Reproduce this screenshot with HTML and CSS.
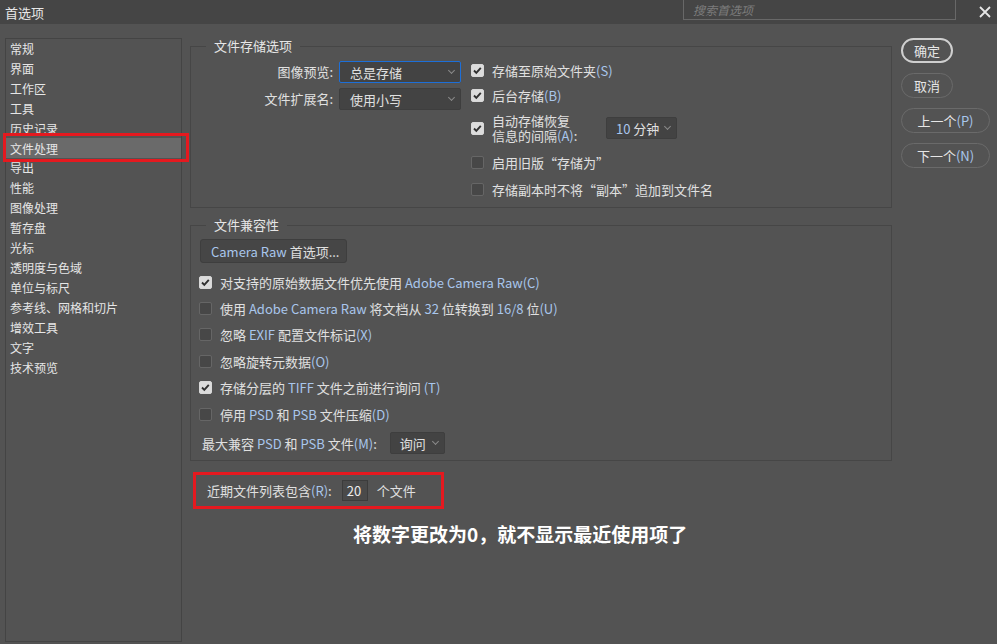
FILE: index.html
```html
<!DOCTYPE html>
<html lang="zh-CN">

<head>
    <meta charset="UTF-8">
    <title>首选项</title>
    <link rel="stylesheet" href="styles.css">
</head>

<body>
    <header class="titlebar">
        <span class="title">首选项</span>
        <div class="search">搜索首选项</div>
        <span class="close">
            <svg width="12" height="12" viewBox="0 0 12 12"><path d="M1 1 L11 11 M11 1 L1 11" stroke="#e6e6e6" stroke-width="1.8" fill="none"/></svg>
        </span>
    </header>

    <div class="window">
        <!-- left menu -->
        <aside class="sidebar">
            <ul class="menu">
                <li>常规</li>
                <li>界面</li>
                <li>工作区</li>
                <li>工具</li>
                <li>历史记录</li>
                <li class="active">文件处理</li>
                <li>导出</li>
                <li>性能</li>
                <li>图像处理</li>
                <li>暂存盘</li>
                <li>光标</li>
                <li>透明度与色域</li>
                <li>单位与标尺</li>
                <li>参考线、网格和切片</li>
                <li>增效工具</li>
                <li>文字</li>
                <li>技术预览</li>
            </ul>
            <div class="mark"></div>
        </aside>

        <main class="main">
            <fieldset class="group store">
                <legend>文件存储选项</legend>
                <div class="store-body">
                    <div class="store-left">
                        <label>图像预览:</label>
                        <div class="select focus"><span>总是存储</span><i class="chev"></i></div>
                        <label>文件扩展名:</label>
                        <div class="select"><span>使用小写</span><i class="chev"></i></div>
                    </div>
                    <div class="store-right">
                        <div class="check-row r1"><span class="box on"></span><span>存储至原始文件夹<span class="en">(S)</span></span></div>
                        <div class="check-row r2"><span class="box on"></span><span>后台存储<span class="en">(B)</span></span></div>
                        <div class="check-row r3">
                            <span class="box on"></span>
                            <span class="two-line"><span class="ln">自动存储恢复</span><span class="ln">信息的间隔<span class="en">(A)</span>:</span></span>
                            <div class="select minutes"><span><span class="en">10</span> 分钟</span><i class="chev"></i></div>
                        </div>
                        <div class="check-row r4"><span class="box"></span><span>启用旧版“存储为”</span></div>
                        <div class="check-row r5"><span class="box"></span><span>存储副本时不将“副本”追加到文件名</span></div>
                    </div>
                </div>
            </fieldset>

            <fieldset class="group compat">
                <legend>文件兼容性</legend>
                <div class="compat-body">
                    <button class="raw-btn"><span class="en">Camera Raw</span> 首选项...</button>
                    <div class="row first"><span class="box on"></span><span>对支持的原始数据文件优先使用 <span class="en">Adobe Camera Raw(C)</span></span></div>
                    <div class="row"><span class="box"></span><span>使用 <span class="en">Adobe Camera Raw</span> 将文档从 <span class="en">32</span> 位转换到 <span class="en">16/8</span> 位<span class="en">(U)</span></span></div>
                    <div class="row"><span class="box"></span><span>忽略 <span class="en">EXIF</span> 配置文件标记<span class="en">(X)</span></span></div>
                    <div class="row"><span class="box"></span><span>忽略旋转元数据<span class="en">(O)</span></span></div>
                    <div class="row"><span class="box on"></span><span>存储分层的 <span class="en">TIFF</span> 文件之前进行询问 <span class="en">(T)</span></span></div>
                    <div class="row"><span class="box"></span><span>停用 <span class="en">PSD</span> 和 <span class="en">PSB</span> 文件压缩<span class="en">(D)</span></span></div>
                    <div class="max-row">
                        <span>最大兼容 <span class="en">PSD</span> 和 <span class="en">PSB</span> 文件<span class="en">(M)</span>:</span>
                        <div class="select ask"><span>询问</span><i class="chev"></i></div>
                    </div>
                </div>
            </fieldset>

            <div class="recent">
                <span>近期文件列表包含<span class="en">(R)</span>:</span>
                <span class="num">20</span>
                <span>个文件</span>
            </div>

            <p class="note">将数字更改为0，就不显示最近使用项了</p>
        </main>

        <div class="actions">
            <button class="pill primary">确定</button>
            <button class="pill">取消</button>
            <button class="pill wide">上一个<span class="en">(P)</span></button>
            <button class="pill wide">下一个<span class="en">(N)</span></button>
        </div>
    </div>
</body>

</html>
```

FILE: styles.css
```css
/* General styles */
html, body {
    margin: 0;
    padding: 0;
    height: 644px;
    overflow: hidden;
}

body {
    background-color: #535353;
    color: #e0e0e0;
    font-family: "Noto Sans CJK SC", "Noto Sans", sans-serif;
    font-size: 13px;
}

.en {
    color: #a9c6ec;
}

/* Title bar */
.titlebar {
    height: 24px;
    background-color: #454545;
    display: flex;
    align-items: center;
}

.title {
    padding-left: 5px;
    font-size: 13px;
    color: #e8e8e8;
}

.search {
    margin-left: auto;
    align-self: flex-start;
    margin-top: -1px;
    width: 273px;
    height: 21px;
    box-sizing: border-box;
    border: 1px solid #686868;
    padding-left: 9px;
    font-size: 12px;
    line-height: 19px;
    font-style: italic;
    color: #7c7c7c;
}

.close {
    display: flex;
    margin-left: 23px;
    margin-right: 6px;
}

/* Layout */
.window {
    display: flex;
    align-items: flex-start;
    padding-top: 14px;
}

.sidebar {
    position: relative;
    margin-left: 5px;
    width: 177px;
    height: 604px;
    box-sizing: border-box;
    border: 1px solid #444;
}

.menu {
    list-style: none;
    margin: 0;
    padding: 0;
    font-size: 12px;
}

.menu li {
    height: 20px;
    line-height: 20px;
    padding-left: 4px;
    color: #e6e6e6;
}

.menu li.active {
    background-color: #6a6a6a;
    margin-top: -1px;
    line-height: 21px;
}

.mark {
    position: absolute;
    left: -3px;
    top: 94px;
    width: 186px;
    height: 29px;
    box-sizing: border-box;
    border: 3px solid #e5191f;
}

.main {
    margin-left: 8px;
    width: 702px;
}

/* Group boxes */
.group {
    margin: 0;
    padding: 0;
    border: 1px solid #464646;
    min-width: 0;
}

.group legend {
    margin-left: 15px;
    padding: 0 8px;
    font-size: 13px;
    line-height: 16px;
    color: #e6e6e6;
}

.store-body {
    display: flex;
    padding: 7px 0 9px;
}

.store-left {
    width: 270px;
    display: grid;
    grid-template-columns: 1fr 122px;
    column-gap: 6px;
    row-gap: 5px;
    align-content: start;
}

.store-left label {
    text-align: right;
    line-height: 22px;
}

.store-right {
    margin-left: 10px;
}

.check-row {
    display: flex;
    align-items: center;
    height: 18px;
}

.check-row.r2 { margin-top: 7px; }
.check-row.r3 { margin-top: 9px; height: 30px; }
.check-row.r4 { margin-top: 10px; }
.check-row.r5 { margin-top: 9px; }

.two-line {
    width: 114px;
    display: flex;
    flex-direction: column;
}

.two-line .ln {
    height: 15px;
    line-height: 15px;
}

/* Checkboxes */
.box {
    flex: none;
    width: 13px;
    height: 13px;
    box-sizing: border-box;
    border-radius: 2px;
    border: 1px solid #666;
    background-color: #474747;
    margin-right: 8px;
}

.box.on {
    border-color: #d8d8d8;
    background: #dcdcdc url("data:image/svg+xml,%3Csvg xmlns='http://www.w3.org/2000/svg' width='13' height='13'%3E%3Cpath d='M3 6.5 L5.3 8.8 L9.8 3.8' stroke='%23303030' stroke-width='1.9' fill='none'/%3E%3C/svg%3E") center / 13px 13px no-repeat;
}

/* Dropdowns */
.select {
    height: 22px;
    box-sizing: border-box;
    border: 1px solid #3e3e3e;
    border-radius: 2px;
    background-color: #434343;
    display: flex;
    align-items: center;
    justify-content: space-between;
    padding: 0 4px 0 10px;
}

.select.focus {
    border-color: #1d6fd8;
}

.chev {
    width: 4px;
    height: 4px;
    border-right: 1px solid #8a8a8a;
    border-bottom: 1px solid #8a8a8a;
    transform: rotate(45deg);
    margin: 0 2px 3px 0;
}

.select.minutes {
    width: 71px;
    padding-left: 9px;
}

.select.ask {
    width: 55px;
    padding-left: 9px;
    margin-left: 13px;
}

/* File compatibility */
.group.compat {
    margin-top: 9px;
}

.compat-body {
    padding: 6px 0 6px 8px;
}

.raw-btn {
    display: block;
    margin-left: 1px;
    width: 147px;
    height: 24px;
    border: 1px solid #3e3e3e;
    border-radius: 3px;
    background-color: #464646;
    color: #e0e0e0;
    font-family: inherit;
    font-size: 13px;
    text-align: left;
    padding: 0 0 0 10px;
}

.row {
    display: flex;
    align-items: center;
    height: 26.4px;
}

.row.first {
    margin-top: 6px;
}

.max-row {
    display: flex;
    align-items: center;
    margin-top: 5px;
    padding-left: 3px;
}

/* Recent files */
.recent {
    margin: 11px 0 0 3px;
    width: 251px;
    height: 37px;
    box-sizing: border-box;
    border: 3px solid #e5191f;
    display: flex;
    align-items: center;
    padding-left: 11px;
}

.num {
    width: 26px;
    height: 21px;
    box-sizing: border-box;
    border: 1px solid #3c3c3c;
    background-color: #4a4a4a;
    margin: 0 9px 0 10px;
    padding-left: 4px;
    line-height: 19px;
    color: #ececec;
}

.note {
    margin: 13px 0 0;
    padding-left: 163px;
    font-size: 19px;
    line-height: 24px;
    font-weight: bold;
    color: #fff;
}

/* Right buttons */
.actions {
    margin-left: 9px;
    display: flex;
    flex-direction: column;
    gap: 10px;
}

.pill {
    width: 52px;
    height: 25px;
    box-sizing: border-box;
    border: 1px solid #6a6a6a;
    border-radius: 13px;
    background: transparent;
    color: #e6e6e6;
    font-family: inherit;
    font-size: 13px;
    padding: 0;
}

.pill.primary {
    border: 2px solid #cfcfcf;
}

.pill.wide {
    width: 89px;
}
```
